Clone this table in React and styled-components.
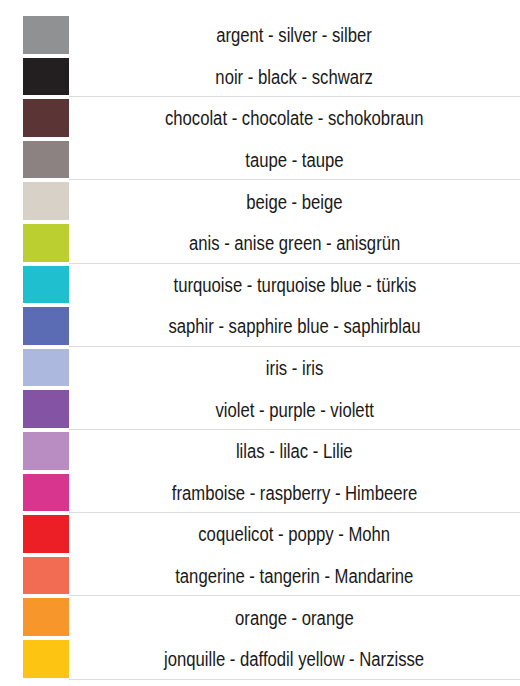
import React from "react"
import styled, { createGlobalStyle } from "styled-components"

const GlobalStyle = createGlobalStyle`
  html, body {
    margin: 0;
    padding: 0;
    background: #ffffff;
  }
  body {
    font-family: "Liberation Sans", Arial, sans-serif;
  }
`

const colors = [
  { hex: "#8f9193", label: "argent - silver - silber" },
  { hex: "#231f20", label: "noir - black - schwarz" },
  { hex: "#5b3535", label: "chocolat - chocolate - schokobraun" },
  { hex: "#8d8282", label: "taupe - taupe" },
  { hex: "#d8d1c7", label: "beige - beige" },
  { hex: "#bccf30", label: "anis - anise green - anisgrün" },
  { hex: "#20bfcf", label: "turquoise - turquoise blue - türkis" },
  { hex: "#5c6cb4", label: "saphir - sapphire blue - saphirblau" },
  { hex: "#adb8de", label: "iris - iris" },
  { hex: "#8553a3", label: "violet - purple - violett" },
  { hex: "#b98cc2", label: "lilas - lilac - Lilie" },
  { hex: "#d8358f", label: "framboise - raspberry - Himbeere" },
  { hex: "#ec1f27", label: "coquelicot - poppy - Mohn" },
  { hex: "#f26c53", label: "tangerine - tangerin - Mandarine" },
  { hex: "#f7962a", label: "orange - orange" },
  { hex: "#fdc511", label: "jonquille - daffodil yellow - Narzisse" },
]

const List = styled.div`
  padding: 14px 0 0 23px;
  width: 497px;
`

const Row = styled.div`
  display: grid;
  grid-template-columns: 46px 1fr;
  height: 41.6px;
`

const Swatch = styled.div`
  align-self: center;
  height: 37.6px;
  background: ${(p) => p.color};
`

const Label = styled.div`
  display: flex;
  align-items: center;
  justify-content: center;
  box-sizing: border-box;
  padding-top: 3px;
  border-bottom: 1px solid ${(p) => (p.divider ? "#dcdcdc" : "transparent")};
`

// the reference uses a condensed grotesque, so squeeze Arial-metric text
const Text = styled.span`
  display: inline-block;
  font-size: 19.5px;
  color: #191919;
  white-space: nowrap;
  transform: scaleX(0.855);
`

export default function App() {
  return (
    <>
      <GlobalStyle />
      <List>
        {colors.map((c, i) => (
          <Row key={c.hex}>
            <Swatch color={c.hex} />
            <Label divider={i % 2 === 1}>
              <Text>{c.label}</Text>
            </Label>
          </Row>
        ))}
      </List>
    </>
  )
}
